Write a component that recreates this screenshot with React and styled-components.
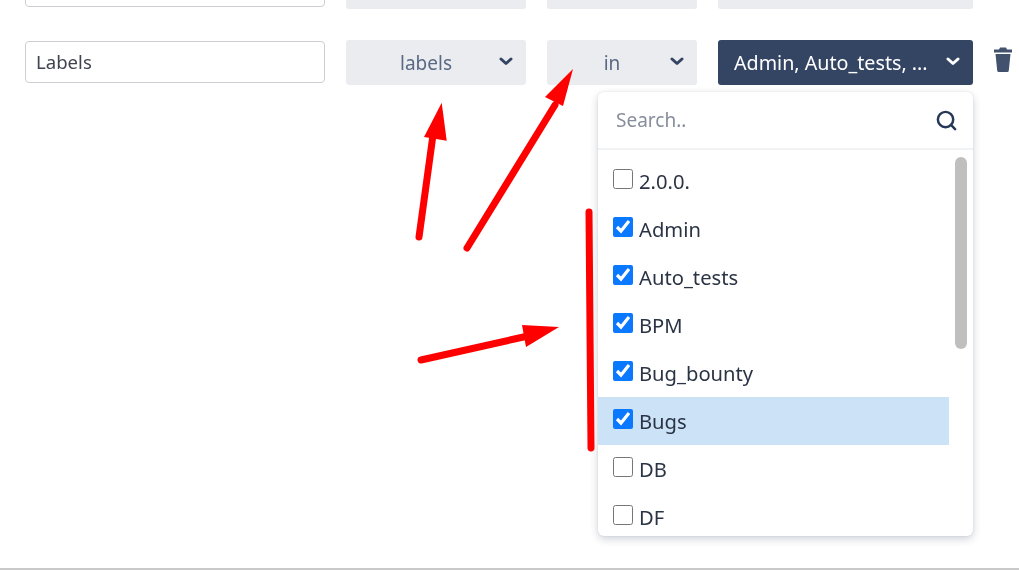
import React from "react";
import styled, { createGlobalStyle } from "styled-components";
import { FiSearch } from "react-icons/fi";

const Global = createGlobalStyle`
  html, body { margin: 0; padding: 0; background: #fff; }
  * { box-sizing: border-box; }
`;

const Page = styled.div`
  position: relative;
  width: 1019px;
  height: 570px;
  overflow: hidden;
  background: #fff;
  font-family: "Noto Sans", "Open Sans", sans-serif;
  border-bottom: 2px solid #c9c9c9;
  filter: blur(0.3px);
`;

const Rows = styled.div`
  display: flex;
  flex-direction: column;
  gap: 31px;
  margin-top: -36px;
  padding-left: 25px;
`;

const Row = styled.div`
  display: flex;
  align-items: center;
  height: 45px;
`;

const TextField = styled.div`
  width: 300px;
  height: 42px;
  margin: 0 21px 2px 0;
  padding-left: 10px;
  display: flex;
  align-items: center;
  background: #fff;
  border: 1px solid #ccd0d5;
  border-radius: 4px;
  color: #3f4450;
  font-size: 18.6px;
`;

const Select = styled.div`
  position: relative;
  width: ${(p) => p.$width}px;
  height: 45px;
  margin-right: 21px;
  border-radius: 3px;
  background: ${(p) => (p.$active ? "#344563" : "#ebecf0")};
  color: ${(p) => (p.$active ? "#fff" : "#5a6984")};
  font-size: ${(p) => (p.$active ? "19.7px" : "19px")};
  display: flex;
  align-items: center;
  justify-content: ${(p) => (p.$active ? "flex-start" : "center")};
  padding: ${(p) => (p.$active ? "0 0 0 16px" : "0 20px 0 0")};
  white-space: nowrap;
`;

const Caret = styled.svg`
  position: absolute;
  right: 13px;
  top: 17px;
  width: 14px;
  height: 9px;
  fill: none;
  stroke: ${(p) => (p.$light ? "#fff" : "#344563")};
  stroke-width: 3;
  stroke-linecap: round;
  stroke-linejoin: round;
`;

const Trash = styled.svg`
  width: 18px;
  height: 25px;
  margin-bottom: 6px;
  fill: #42526e;
`;

const Popup = styled.div`
  position: absolute;
  left: 598px;
  top: 92px;
  width: 375px;
  height: 444px;
  background: #fff;
  border-radius: 6px;
  box-shadow: 0 3px 8px rgba(9, 30, 66, 0.2), 0 0 2px rgba(9, 30, 66, 0.1);
  overflow: hidden;
`;

const SearchBar = styled.div`
  height: 58px;
  padding: 0 15px 0 18px;
  display: flex;
  align-items: center;
  justify-content: space-between;
  border-bottom: 2px solid #f1f2f4;
  color: #868e9b;
  font-size: 19px;
  svg { width: 23px; height: 23px; color: #253858; stroke-width: 2.6; }
`;

const List = styled.div`
  position: relative;
  padding-top: 7px;
`;

const Thumb = styled.div`
  position: absolute;
  right: 6px;
  top: 7px;
  width: 12px;
  height: 192px;
  border-radius: 6px;
  background: #bfbfbf;
`;

const Item = styled.label`
  width: 351px;
  height: 48px;
  display: flex;
  align-items: center;
  gap: 6px;
  padding-left: 15px;
  background: ${(p) => (p.$hover ? "#cce2f7" : "transparent")};
  color: #2b3445;
  font-size: 20.2px;
`;

const Box = styled.input`
  width: 20px;
  height: 20px;
  margin: 0 0 4px;
  accent-color: #0a78ff;
`;

const Marks = styled.svg`
  position: absolute;
  inset: 0;
  pointer-events: none;
`;

const options = [
  ["2.0.0.", false],
  ["Admin", true],
  ["Auto_tests", true],
  ["BPM", true],
  ["Bug_bounty", true],
  ["Bugs", true],
  ["DB", false],
  ["DF", false],
];

const Chevron = ({ light }) => (
  <Caret $light={light} viewBox="0 0 14 9">
    <path d="M2 2 L7 6.5 L12 2" />
  </Caret>
);

export default function App() {
  return (
    <Page>
      <Global />
      <Rows>
        <Row>
          <TextField />
          <Select $width={180} />
          <Select $width={150} />
          <Select $width={255} />
        </Row>
        <Row>
          <TextField>Labels</TextField>
          <Select $width={180}>labels<Chevron /></Select>
          <Select $width={150}>in<Chevron /></Select>
          <Select $width={255} $active>Admin, Auto_tests, ...<Chevron light /></Select>
          <Trash viewBox="0 0 18 25">
            <path d="M6 0.5 H12 L13 2.5 H18 V5.5 H0 V2.5 H5 Z" />
            <path d="M1.5 7 H16.5 L14.8 23.5 Q14.7 25 13.2 25 H4.8 Q3.3 25 3.2 23.5 Z" />
          </Trash>
        </Row>
      </Rows>
      <Popup>
        <SearchBar>Search..<FiSearch /></SearchBar>
        <List>
          <Thumb />
          {options.map(([name, on]) => (
            <Item key={name} $hover={name === "Bugs"}>
              <Box type="checkbox" checked={on} readOnly />
              {name}
            </Item>
          ))}
        </List>
      </Popup>
      <Marks width="1019" height="570" viewBox="0 0 1019 570">
        <g stroke="#ff0000" strokeWidth="7" strokeLinecap="round" fill="none">
          <path d="M419 237 L433 135" />
          <path d="M467 248 L555 105" />
          <path d="M421 360 L528 336" />
          <path d="M589 212 L591 448" />
        </g>
        <g fill="#ff0000">
          <path d="M441.7 102.7 L424 137 L446.7 140.7 Z" />
          <path d="M573 69 L545 97 L563 106 Z" />
          <path d="M559 327 L522 325 L526 347 Z" />
        </g>
      </Marks>
    </Page>
  );
}
